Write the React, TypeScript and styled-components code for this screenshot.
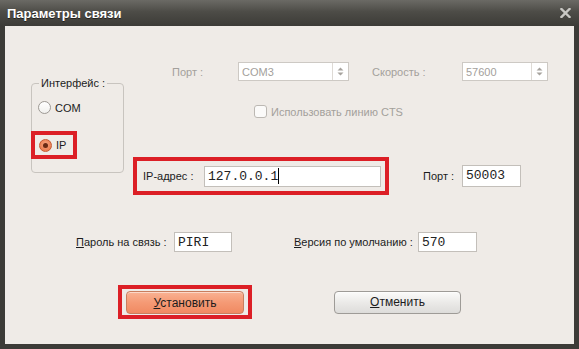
import styled, { createGlobalStyle } from "styled-components";

const GlobalStyle = createGlobalStyle`
  html, body { margin: 0; padding: 0; background: #3c3b37; }
  body { font-family: "Liberation Sans", Arial, sans-serif; font-size: 11px; }
`;

const Window = styled.div`
  width: 579px;
  height: 349px;
  display: flex;
  flex-direction: column;
  background: #3c3b37;
`;

const TitleBar = styled.div`
  height: 26px;
  display: flex;
  align-items: center;
  justify-content: space-between;
  padding: 0 8px 0 7px;
  box-sizing: border-box;
  background: linear-gradient(#6b6a65 0%, #4d4c47 45%, #3c3b37 100%);
  color: #fff;
  font-weight: bold;
  font-size: 13px;
  text-shadow: 0 1px 0 rgba(0, 0, 0, 0.5);
`;

const CloseIcon = () => (
  <svg width="11" height="10" viewBox="0 0 11 10">
    <path d="M1.5 1 L9.5 9 M9.5 1 L1.5 9" stroke="#c9c8c4" strokeWidth="2.4" strokeLinecap="square" />
  </svg>
);

const Body = styled.div`
  flex: 1;
  display: flex;
  padding: 0 5px 5px;
`;

const Panel = styled.div`
  flex: 1;
  background: #efebe7;
  padding-top: 36px;
  display: flex;
  flex-direction: column;
  color: #1c1c1c;
  font-size: 11px;
`;

const TopSection = styled.div`
  display: flex;
  align-items: flex-start;
`;

const GroupBox = styled.fieldset`
  margin: 15px 0 0 26px;
  width: 93px;
  height: 96px;
  box-sizing: border-box;
  border: 1px solid #c8c4bf;
  border-radius: 4px;
  padding: 0;
  display: flex;
  flex-direction: column;
`;

const Legend = styled.legend`
  padding: 0 2px;
  margin-left: 7px;
  font-size: 11px;
`;

const RadioRow = styled.label<{ $top: number; $left: number }>`
  display: flex;
  align-items: center;
  gap: 4px;
  margin-top: ${(p) => p.$top}px;
  margin-left: ${(p) => p.$left}px;
`;

const Radio = styled.span<{ $checked?: boolean }>`
  width: 13px;
  height: 13px;
  border-radius: 50%;
  box-sizing: border-box;
  display: inline-flex;
  align-items: center;
  justify-content: center;
  border: 1px solid ${(p) => (p.$checked ? "#c55a33" : "#9d9994")};
  background: ${(p) =>
    p.$checked
      ? "radial-gradient(circle at 50% 40%, #f7a582, #e8703f)"
      : "linear-gradient(#ffffff, #f1f0ee)"};
  &::after {
    content: "";
    display: ${(p) => (p.$checked ? "block" : "none")};
    width: 5px;
    height: 5px;
    border-radius: 50%;
    background: #6a2a14;
  }
`;

const RedFrame = styled.div<{ $w: number; $h: number }>`
  width: ${(p) => p.$w}px;
  height: ${(p) => p.$h}px;
  box-sizing: border-box;
  border: 4px solid #dc1f26;
  display: flex;
  align-items: center;
`;

const IpRadioFrame = styled(RedFrame)`
  margin: 17px 0 0 -1px;
  padding-left: 4px;
`;

const RightColumn = styled.div`
  margin-left: 9px;
  display: flex;
  flex-direction: column;
`;

const Row = styled.div`
  display: flex;
  align-items: center;
`;

const Label = styled.span<{ $w: number; $disabled?: boolean }>`
  width: ${(p) => p.$w}px;
  flex-shrink: 0;
  white-space: nowrap;
  color: ${(p) => (p.$disabled ? "#a3a09b" : "#1c1c1c")};
`;

const Hot = styled.span`
  text-decoration: underline;
`;

const Combo = styled.div<{ $w: number }>`
  width: ${(p) => p.$w}px;
  height: 19px;
  box-sizing: border-box;
  border: 1px solid #cdc9c4;
  background: #fff;
  display: flex;
  color: #a3a09b;
`;

const ComboText = styled.span`
  flex: 1;
  padding: 3px 0 0 3px;
`;

const Spinner = styled.span`
  width: 15px;
  border-left: 1px solid #dedad5;
  display: flex;
  align-items: center;
  justify-content: center;
`;

const SpinIcon = () => (
  <svg width="7" height="9" viewBox="0 0 7 9">
    <path d="M3.5 0.5 L6.5 3.5 L0.5 3.5 Z M3.5 8.5 L6.5 5.5 L0.5 5.5 Z" fill="#a7a39e" />
  </svg>
);

const CheckRow = styled.label`
  display: flex;
  align-items: center;
  gap: 4px;
  margin: 24px 0 0 121px;
  color: #a3a09b;
`;

const CheckBox = styled.span`
  width: 13px;
  height: 13px;
  box-sizing: border-box;
  border: 1px solid #bcb8b3;
  border-radius: 3px;
  background: #fbfaf9;
`;

const Input = styled.div<{ $w: number; $h?: number }>`
  width: ${(p) => p.$w}px;
  height: ${(p) => p.$h ?? 20}px;
  box-sizing: border-box;
  border: 1px solid #c3bfba;
  background: #fff;
  font-family: "Liberation Mono", "Courier New", monospace;
  font-size: 13px;
  color: #222;
  padding: 2px 0 0 3px;
  display: flex;
  align-items: flex-start;
`;

const Caret = styled.span`
  display: inline-block;
  width: 1px;
  height: 16px;
  margin-top: -1px;
  background: #000;
`;

const IpRow = styled(Row)`
  margin-top: 39px;
`;

const IpFrame = styled(RedFrame)`
  padding-left: 6px;
`;

const FieldsRow = styled(Row)`
  margin: 37px 0 0 71px;
`;

const ButtonRow = styled(Row)`
  margin: 33px 0 0 113px;
`;

const ButtonFrame = styled(RedFrame)`
  padding: 2px 4px 1px;
  align-items: stretch;
`;

const Button = styled.button<{ $primary?: boolean; $w: number }>`
  width: ${(p) => p.$w}px;
  height: 23px;
  margin: 0;
  padding: 0;
  font-family: "Liberation Sans", Arial, sans-serif;
  font-size: 12px;
  color: #1c1c1c;
  border-radius: 4px;
  border: 1px solid ${(p) => (p.$primary ? "#c97e5e" : "#9e9b97")};
  background: ${(p) =>
    p.$primary
      ? "linear-gradient(#f9b293 0%, #f59a75 50%, #f08a62 100%)"
      : "linear-gradient(#fbfbfa 0%, #ebeae8 50%, #dddcda 100%)"};
  box-shadow: inset 0 1px 0 rgba(255, 255, 255, 0.5);
`;

export default function App() {
  return (
    <>
      <GlobalStyle />
      <Window>
        <TitleBar>
          <span>Параметры связи</span>
          <CloseIcon />
        </TitleBar>
        <Body>
          <Panel>
            <TopSection>
              <GroupBox>
                <Legend>Интерфейс :</Legend>
                <RadioRow $top={12} $left={6}>
                  <Radio />
                  <span>COM</span>
                </RadioRow>
                <IpRadioFrame $w={46} $h={28}>
                  <RadioRow $top={0} $left={0}>
                    <Radio $checked />
                    <span>IP</span>
                  </RadioRow>
                </IpRadioFrame>
              </GroupBox>
              <RightColumn>
                <Row style={{ paddingLeft: 39 }}>
                  <Label $w={66} $disabled>
                    Порт :
                  </Label>
                  <Combo $w={111}>
                    <ComboText>COM3</ComboText>
                    <Spinner>
                      <SpinIcon />
                    </Spinner>
                  </Combo>
                  <Label $w={90} $disabled style={{ marginLeft: 23 }}>
                    Скорость :
                  </Label>
                  <Combo $w={86}>
                    <ComboText>57600</ComboText>
                    <Spinner>
                      <SpinIcon />
                    </Spinner>
                  </Combo>
                </Row>
                <CheckRow>
                  <CheckBox />
                  <span>Использовать линию CTS</span>
                </CheckRow>
                <IpRow>
                  <IpFrame $w={256} $h={38}>
                    <Label $w={61}>IP-адрес :</Label>
                    <Input $w={177} $h={21}>
                      127.0.0.1
                      <Caret />
                    </Input>
                  </IpFrame>
                  <Label $w={39} style={{ marginLeft: 34 }}>
                    Порт :
                  </Label>
                  <Input $w={59} $h={22}>
                    50003
                  </Input>
                </IpRow>
              </RightColumn>
            </TopSection>
            <FieldsRow>
              <Label $w={98}>
                <Hot>П</Hot>ароль на связь :
              </Label>
              <Input $w={58}>PIRI</Input>
              <Label $w={124} style={{ marginLeft: 62 }}>
                <Hot>В</Hot>ерсия по умолчанию :
              </Label>
              <Input $w={59}>570</Input>
            </FieldsRow>
            <ButtonRow>
              <ButtonFrame $w={134} $h={34}>
                <Button $primary $w={118}>
                  <Hot>У</Hot>становить
                </Button>
              </ButtonFrame>
              <Button $w={127} style={{ marginLeft: 82 }}>
                <Hot>О</Hot>тменить
              </Button>
            </ButtonRow>
          </Panel>
        </Body>
      </Window>
    </>
  );
}
